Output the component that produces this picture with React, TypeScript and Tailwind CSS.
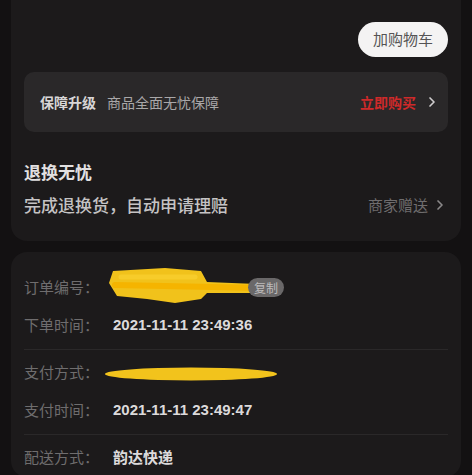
import { ChevronRight } from 'lucide-react';

const FONT = { fontFamily: '"Noto Sans CJK SC", "Noto Sans", sans-serif' };

function InfoRow({ label, children }: { label: string; children?: React.ReactNode }) {
  return (
    <div className="flex items-center h-[38px]">
      <span className="w-[89px] shrink-0 text-[15px] text-[#6f6d6e]">{label}</span>
      <div className="flex-1 min-w-0 flex items-center relative h-full">{children}</div>
    </div>
  );
}

function DateValue({ value }: { value: string }) {
  return (
    <span
      className="text-[15px] font-bold text-[#dcdadb]"
      style={{ fontFamily: '"Liberation Sans", Arial, sans-serif' }}
    >
      {value}
    </span>
  );
}

export default function App() {
  return (
    <div className="w-[472px] h-[475px] overflow-hidden bg-[#131112] px-[11px]" style={FONT}>
      {/* Top card */}
      <div className="bg-[#1c1a1b] rounded-b-[16px] px-[13px] pt-[22px] pb-[23px]">
        <div className="flex justify-end">
          <button className="h-[35px] px-[15px] rounded-full bg-[#f4f3f3] text-[15px] text-[#555354]">
            加购物车
          </button>
        </div>

        <div className="mt-[15px] h-[60px] rounded-[10px] bg-[#2a2829] flex items-center pl-[16px] pr-[8px]">
          <span className="text-[14px] font-bold text-[#d8d6d7]">保障升级</span>
          <span className="ml-[11px] text-[14px] text-[#a9a7a8]">商品全面无忧保障</span>
          <span className="ml-auto text-[14px] font-bold text-[#cf2a2a]">立即购买</span>
          <ChevronRight size={16} strokeWidth={2.5} className="ml-[8px] text-[#cfcdce]" />
        </div>

        <div className="mt-[28px] text-[17px] font-bold text-[#e2e0e1] leading-[24px]">退换无忧</div>
        <div className="mt-[8px] flex items-center">
          <span className="text-[17px] font-medium text-[#c5c3c4]">完成退换货，自动申请理赔</span>
          <span className="ml-auto text-[15px] text-[#6f6d6e]">商家赠送</span>
          <ChevronRight size={16} strokeWidth={2.5} className="ml-[4px] text-[#8a8889]" />
        </div>
      </div>

      {/* Order info card */}
      <div className="mt-[11px] bg-[#1c1a1b] rounded-[16px] px-[13px] pt-[17px]">
        <InfoRow label="订单编号：">
          <svg className="absolute left-[-6px] top-[-10px]" width="170" height="52" viewBox="0 0 170 52">
            <path
              d="M2 24 L6 12 L58 9 L94 12 L100 23 L150 25 L158 29 L150 34 L100 34 L94 40 L68 44 L40 40 L10 37 Z"
              fill="#f1c21b"
            />
            <path d="M8 26 L155 29" stroke="#f5b400" strokeWidth="6" strokeLinecap="round" />
            <path d="M14 18 L88 18" stroke="#f7cc2a" strokeWidth="5" strokeLinecap="round" />
          </svg>
          <span className="absolute left-[135px] h-[19px] px-[6px] rounded-full bg-[#6a6869] text-[12px] leading-[19px] text-[#bdbbbc]">
            复制
          </span>
        </InfoRow>
        <InfoRow label="下单时间：">
          <DateValue value="2021-11-11 23:49:36" />
        </InfoRow>
        <div className="h-px bg-[#2a2829] my-[4px]" />
        <InfoRow label="支付方式：">
          <svg className="absolute left-[-10px] top-[12px]" width="180" height="16" viewBox="0 0 180 16">
            <ellipse cx="88" cy="8" rx="86" ry="6.5" fill="#f2c31c" />
          </svg>
        </InfoRow>
        <InfoRow label="支付时间：">
          <DateValue value="2021-11-11 23:49:47" />
        </InfoRow>
        <div className="h-px bg-[#2a2829] my-[4px]" />
        <InfoRow label="配送方式：">
          <span className="text-[15px] font-bold text-[#dcdadb]">韵达快递</span>
        </InfoRow>
      </div>
    </div>
  );
}
